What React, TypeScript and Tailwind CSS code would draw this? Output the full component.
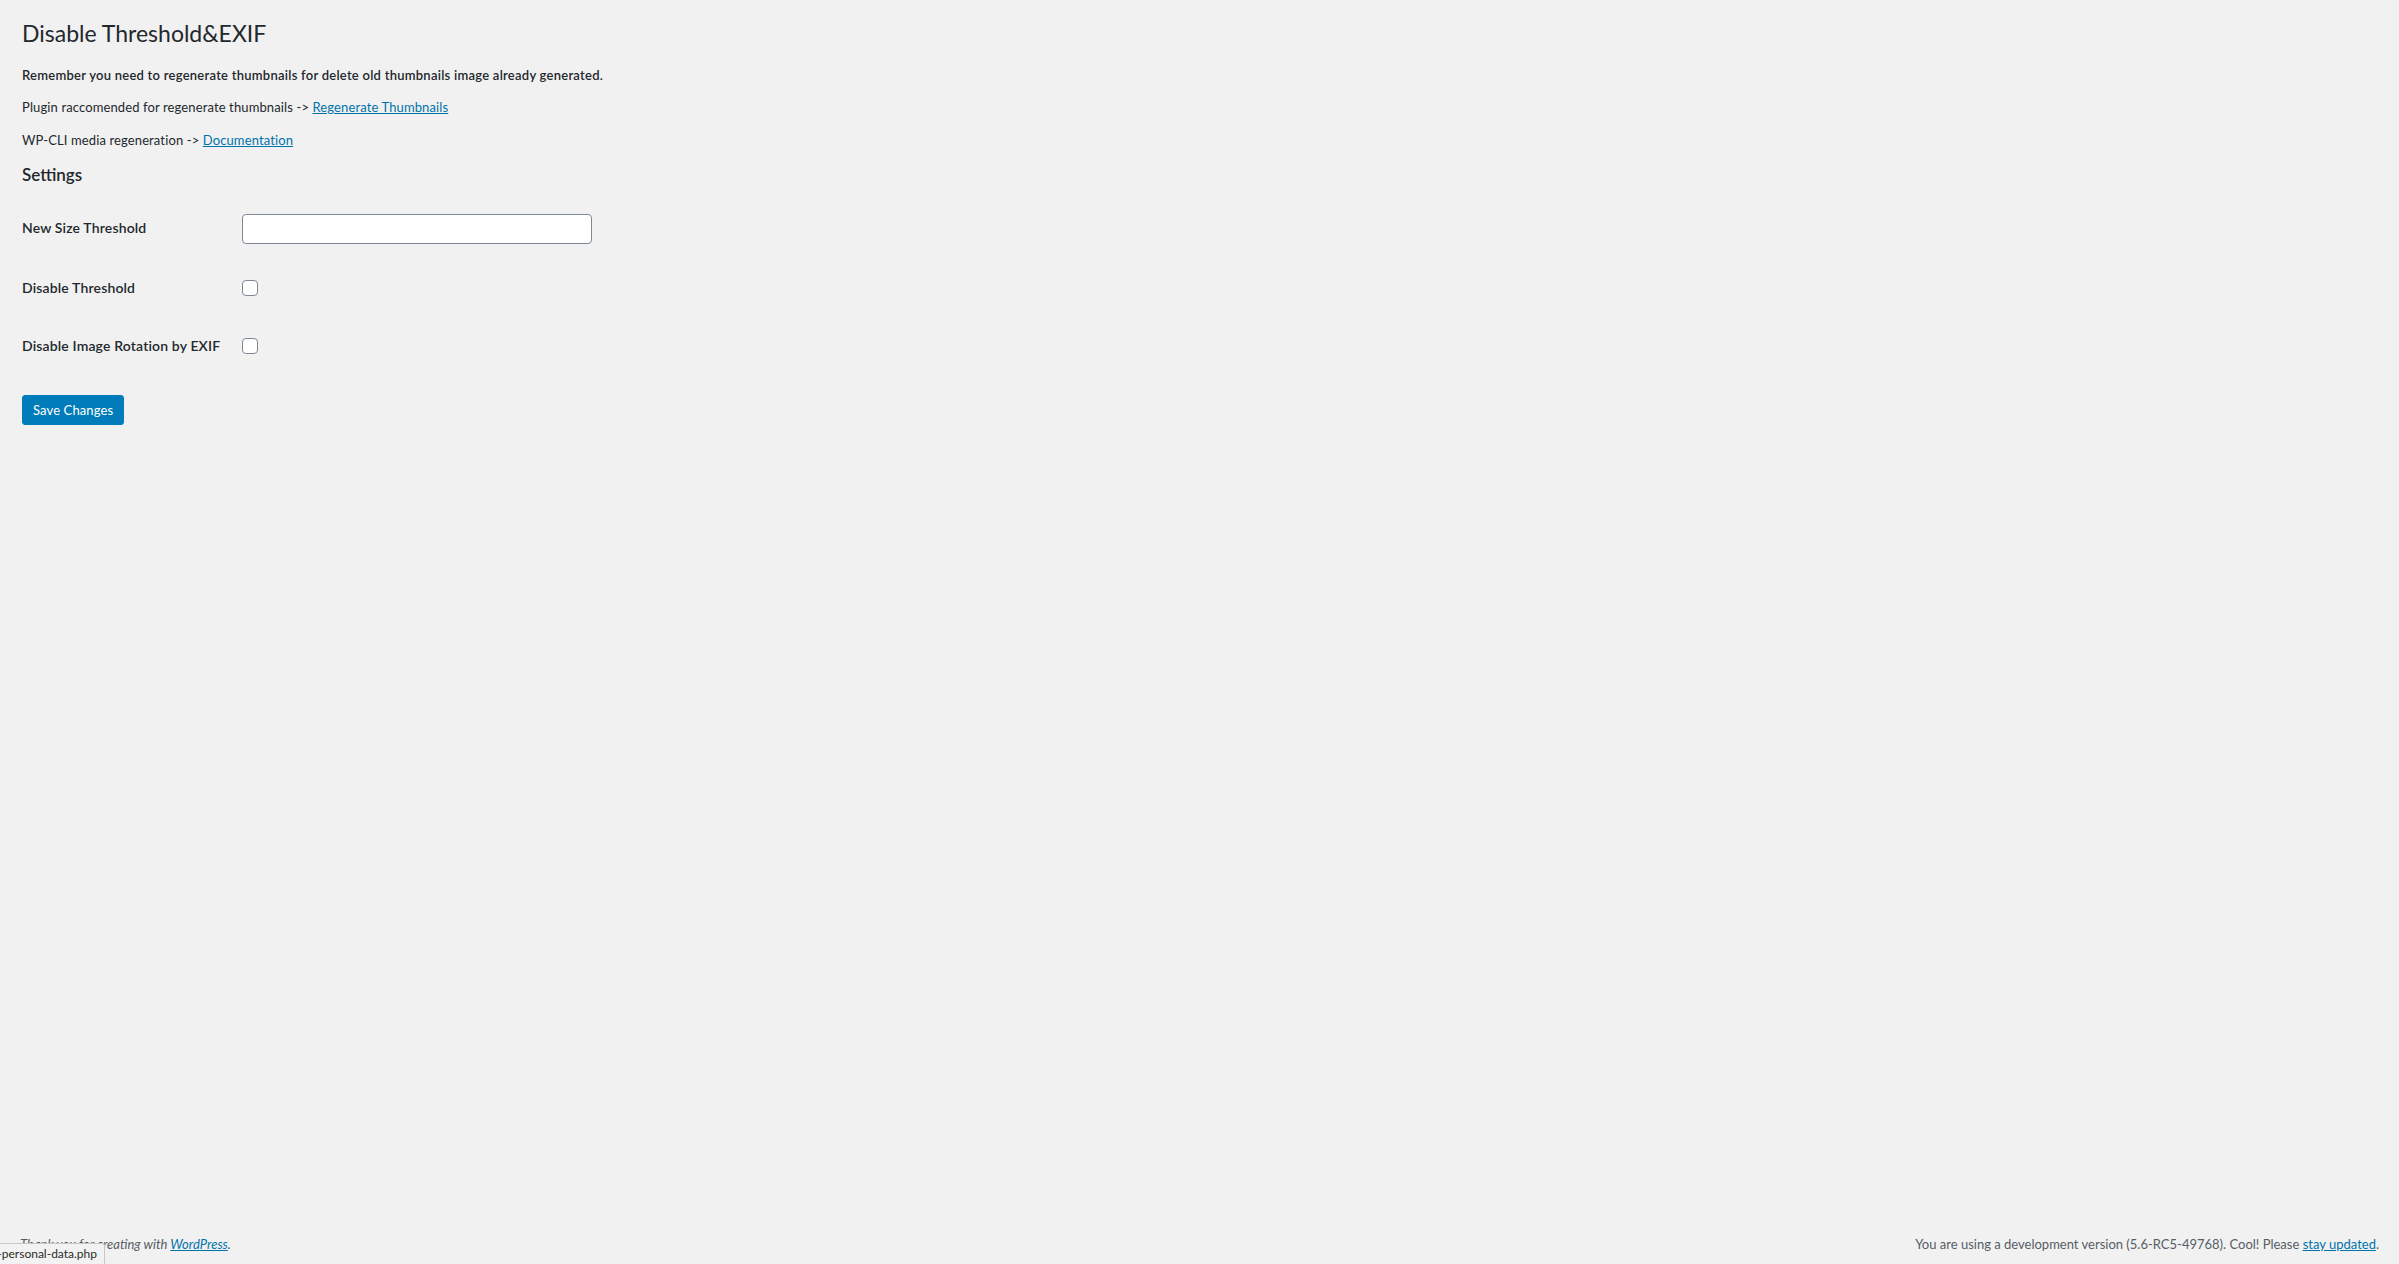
import React from "react";

function Row({ label, children, tall }: { label: string; children: React.ReactNode; tall?: boolean }) {
  return (
    <div className={`flex ${tall ? "h-[60px]" : "h-[58px]"}`}>
      <div className="w-[210px] shrink-0 pt-5 pr-[10px] text-[14px] font-semibold leading-[1.3] tracking-[0.15px] text-[#23282d]">
        {label}
      </div>
      <div className="pl-[10px]">{children}</div>
    </div>
  );
}

export default function App() {
  return (
    <div className="relative flex min-h-screen flex-col bg-[#f1f1f1] font-['Lato',sans-serif] text-[13px] leading-[1.4] text-[#23282d]">
      <div className="flex-1 pt-[10px] pl-[22px] pr-5">
        <h1 className="pt-[9px] pb-[4px] text-[23px] font-normal leading-[1.3] text-[#23282d]">
          Disable Threshold&amp;EXIF
        </h1>
        <p className="mt-[13px] font-semibold leading-[1.5] tracking-[0.25px]">
          Remember you need to regenerate thumbnails for delete old thumbnails image already generated.
        </p>
        <p className="mt-[13px] leading-[1.5] tracking-[0.12px]">
          Plugin raccomended for regenerate thumbnails -&gt;{" "}
          <a href="#" className="text-[#0073aa] underline">
            Regenerate Thumbnails
          </a>
        </p>
        <p className="mt-[13px] leading-[1.5] tracking-[0.12px]">
          WP-CLI media regeneration -&gt;{" "}
          <a href="#" className="text-[#0073aa] underline">
            Documentation
          </a>
        </p>
        <h2 className="mt-[16px] text-[17px] font-semibold leading-[18px] text-[#23282d]">Settings</h2>

        <form className="mt-[15px]" onSubmit={(e) => e.preventDefault()}>
          <Row label="New Size Threshold" tall>
            <input
              type="text"
              className="mt-[15px] h-[30px] w-[350px] rounded-[4px] border border-[#7e8993] bg-white px-2 text-[14px] outline-none"
            />
          </Row>
          <Row label="Disable Threshold">
            <input
              type="checkbox"
              className="mt-[21px] block h-4 w-4 appearance-none rounded-[4px] border border-[#7e8993] bg-white"
            />
          </Row>
          <Row label="Disable Image Rotation by EXIF">
            <input
              type="checkbox"
              className="mt-[21px] block h-4 w-4 appearance-none rounded-[4px] border border-[#7e8993] bg-white"
            />
          </Row>
          <div className="mt-5">
            <button
              type="submit"
              className="h-[30px] rounded-[3px] border border-[#007cba] bg-[#007cba] px-[10px] text-[13px] leading-[28px] tracking-[0.12px] text-white"
            >
              Save Changes
            </button>
          </div>
        </form>
      </div>

      <div className="flex justify-between px-5 py-[10px] text-[13px] leading-[1.55] text-[#555d66]">
        <p className="italic">
          Thank you for creating with{" "}
          <a href="#" className="text-[#0073aa] underline">
            WordPress
          </a>
          .
        </p>
        <p>
          You are using a development version (5.6-RC5-49768). Cool! Please{" "}
          <a href="#" className="text-[#0073aa] underline">
            stay updated
          </a>
          .
        </p>
      </div>

      {/* browser status bubble */}
      <div className="absolute bottom-0 left-0 flex h-[21px] w-[105px] justify-end overflow-hidden rounded-tr-[3px] border-t border-r border-[#c8c8c8] bg-[#f2f2f2] pr-[7px] text-[12px] leading-[20px] text-[#2b2b2b]">
        <span className="whitespace-nowrap">export-personal-data.php</span>
      </div>
    </div>
  );
}
